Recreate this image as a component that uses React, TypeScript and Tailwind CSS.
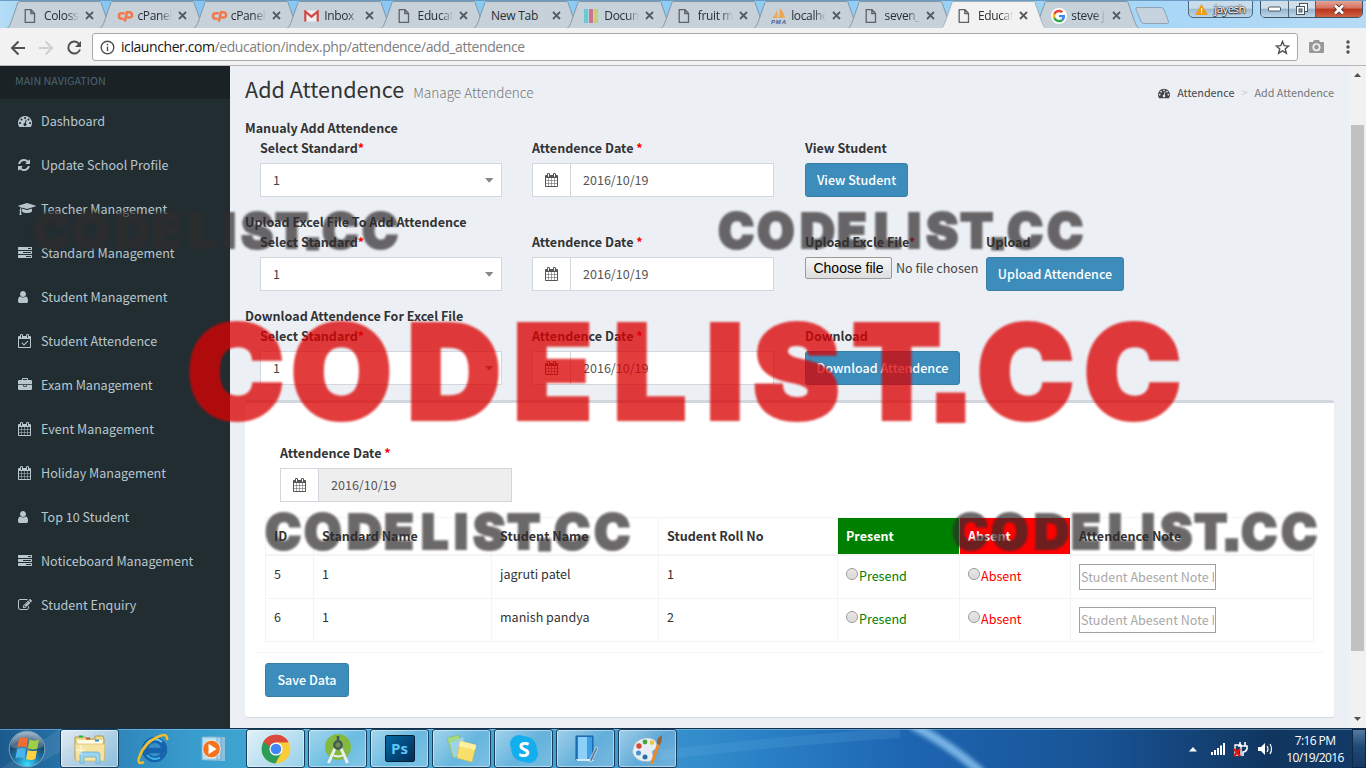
import React from "react";

const SANS = "font-['Noto_Sans_CJK_JP','Source_Sans_Pro',sans-serif]";

/* ---------- icon set (1792 units per em) ---------- */
const ICONS: Record<string, [number, string]> = {
  dash: [1792, "M384 1152q0-53-37.500-90.500t-90.500-37.500-90.500 37.500-37.500 90.500 37.500 90.500 90.500 37.500 90.500-37.500 37.500-90.500zm192-448q0-53-37.500-90.500t-90.500-37.500-90.500 37.500-37.500 90.500 37.500 90.500 90.500 37.500 90.500-37.500 37.500-90.500zm428 481l101-382q6-26-7.500-48.500t-38.500-29.500-48 6.500-30 39.500l-101 382q-60 5-107 43.500t-63 98.500q-20 77 20 146t117 89 146-20 89-117q16-60-6-117t-72-91zm660-33q0-53-37.500-90.500t-90.500-37.500-90.500 37.500-37.500 90.500 37.500 90.500 90.500 37.500 90.500-37.500 37.500-90.500zm-640-640q0-53-37.500-90.500t-90.500-37.500-90.500 37.500-37.500 90.500 37.500 90.500 90.500 37.500 90.500-37.500 37.500-90.500zm448 192q0-53-37.500-90.500t-90.500-37.500-90.500 37.500-37.500 90.500 37.500 90.500 90.500 37.500 90.500-37.500 37.500-90.500zm320 448q0 261-141 483-19 29-54 29h-1402q-35 0-54-29-141-221-141-483 0-182 71-348t191-286 286-191 348-71 348 71 286 191 191 286 71 348z"],
  refresh: [1536, "M1511 1056q0 5-1 7-64 268-268 434.500t-478 166.500q-146 0-282.500-55t-243.500-157l-129 129q-19 19-45 19t-45-19-19-45v-448q0-26 19-45t45-19h448q26 0 45 19t19 45-19 45l-137 137q71 66 161 102t187 36q134 0 250-65t186-179q11-17 53-117 8-23 30-23h192q13 0 22.500 9.500t9.500 22.500zm25-800v448q0 26-19 45t-45 19h-448q-26 0-45-19t-19-45 19-45l138-138q-148-137-349-137-134 0-250 65t-186 179q-11 17-53 117-8 23-30 23h-199q-13 0-22.500-9.500t-9.500-22.500v-7q65-268 270-434.500t480-166.500q146 0 284 55.500t245 156.500l130-129q19-19 45-19t45 19 19 45z"],
  cap: [2304, "M1774 836l18 316q4 69-82 128t-235 93.500-323 34.500-323-34.500-235-93.500-82-128l18-316 574 181q22 7 48 7t48-7zm530-324q0 23-22 31l-1120 352q-4 1-10 1t-10-1l-652-206q-43 34-71 111.500t-34 178.500q63 36 63 109 0 69-58 107l58 433q2 14-8 25-9 11-24 11h-192q-15 0-24-11-10-11-8-25l58-433q-58-38-58-107 0-73 65-111 11-207 98-330l-333-104q-22-8-22-31t22-31l1120-352q4-1 10-1t10 1l1120 352q22 8 22 31z"],
  tasks: [1792, "M1024 1408h640v-128h-640v128zm-384-512h1024v-128h-1024v128zm640-512h384v-128h-384v128zm512 832v256q0 26-19 45t-45 19h-1664q-26 0-45-19t-19-45v-256q0-26 19-45t45-19h1664q26 0 45 19t19 45zm0-512v256q0 26-19 45t-45 19h-1664q-26 0-45-19t-19-45v-256q0-26 19-45t45-19h1664q26 0 45 19t19 45zm0-512v256q0 26-19 45t-45 19h-1664q-26 0-45-19t-19-45v-256q0-26 19-45t45-19h1664q26 0 45 19t19 45z"],
  user: [1280, "M1280 1399q0 109-62.500 187t-150.500 78h-854q-88 0-150.500-78t-62.500-187q0-85 8.500-160.500t31.500-152 58.500-131 94-89 134.500-34.500q131 128 313 128t313-128q76 0 134.500 34.500t94 89 58.500 131 31.500 152 8.500 160.500zm-256-887q0 159-112.500 271.500t-271.500 112.500-271.500-112.500-112.500-271.500 112.500-271.500 271.500-112.500 271.500 112.500 112.500 271.500z"],
  calcheck: [1664, "M1303 964l-512 512q-10 9-23 9t-23-9l-288-288q-9-10-9-23t9-22l46-46q9-9 22-9t23 9l220 220 444-444q10-9 23-9t22 9l46 46q9 9 9 22t-9 23zm-1175 700h1408v-1024h-1408v1024zm384-1216v-288q0-14-9-23t-23-9h-64q-14 0-23 9t-9 23v288q0 14 9 23t23 9h64q14 0 23-9t9-23zm768 0v-288q0-14-9-23t-23-9h-64q-14 0-23 9t-9 23v288q0 14 9 23t23 9h64q14 0 23-9t9-23zm384-64v1280q0 52-38 90t-90 38h-1408q-52 0-90-38t-38-90v-1280q0-52 38-90t90-38h128v-96q0-66 47-113t113-47h64q66 0 113 47t47 113v96h384v-96q0-66 47-113t113-47h64q66 0 113 47t47 113v96h128q52 0 90 38t38 90z"],
  brief: [1792, "M640 256h512v-128h-512v128zm1152 640v480q0 66-47 113t-113 47h-1472q-66 0-113-47t-47-113v-480h672v160q0 26 19 45t45 19h320q26 0 45-19t19-45v-160h672zm-768 0v128h-256v-128h256zm768-480v384h-1792v-384q0-66 47-113t113-47h352v-160q0-40 28-68t68-28h576q40 0 68 28t28 68v160h352q66 0 113 47t47 113z"],
  cal: [1664, "M128 1664h288v-288h-288v288zm352 0h320v-288h-320v288zm-352-352h288v-320h-288v320zm352 0h320v-320h-320v320zm-352-384h288v-288h-288v288zm736 736h320v-288h-320v288zm-384-736h320v-288h-320v288zm768 736h288v-288h-288v288zm-384-352h320v-320h-320v320zm-352-864v-288q0-13-9.500-22.500t-22.500-9.500h-64q-13 0-22.500 9.500t-9.500 22.500v288q0 13 9.500 22.500t22.500 9.500h64q13 0 22.500-9.500t9.500-22.500zm736 864h288v-320h-288v320zm-384-384h320v-288h-320v288zm384 0h288v-288h-288v288zm32-480v-288q0-13-9.500-22.500t-22.500-9.500h-64q-13 0-22.500 9.500t-9.500 22.500v288q0 13 9.500 22.500t22.500 9.500h64q13 0 22.500-9.500t9.500-22.500zm384-64v1280q0 52-38 90t-90 38h-1408q-52 0-90-38t-38-90v-1280q0-52 38-90t90-38h128v-96q0-66 47-113t113-47h64q66 0 113 47t47 113v96h384v-96q0-66 47-113t113-47h64q66 0 113 47t47 113v96h128q52 0 90 38t38 90z"],
  edit: [1792, "M888 1184l116-116-152-152-116 116v56h96v96h56zm440-720q-16-16-33 1l-350 350q-17 17-1 33t33-1l350-350q17-17 1-33zm80 594v190q0 119-84.500 203.500t-203.500 84.500h-832q-119 0-203.500-84.500t-84.500-203.500v-832q0-119 84.500-203.500t203.500-84.500h832q63 0 117 25 15 7 18 23 3 17-9 29l-49 49q-14 14-32 8-23-6-45-6h-832q-66 0-113 47t-47 113v832q0 66 47 113t113 47h832q66 0 113-47t47-113v-126q0-13 9-22l64-64q15-15 35-7t20 29zm-96-738l288 288-672 672h-288v-288zm444 132l-92 92-288-288 92-92q28-28 68-28t68 28l152 152q28 28 28 68t-28 68z"],
};

function Icon({ name, size = 14 }: { name: string; size?: number }) {
  const [w, d] = ICONS[name];
  return (
    <svg width={(w / 1792) * size} height={size} viewBox={`0 0 ${w} 1792`} fill="currentColor" className="block shrink-0">
      <path d={d} />
    </svg>
  );
}

/* ---------- browser tabs ---------- */
const PageIcon = () => (
  <svg width="12" height="14" viewBox="0 0 12 14" fill="none" stroke="#5f6266" strokeWidth="1.3">
    <path d="M1.200 .7h5.800l3.500 3.600v9h-9.300zM6.800 .7v3.800h3.700" />
  </svg>
);
const CpIcon = () => (
  <svg width="17" height="12" viewBox="0 0 17 12" fill="none" stroke="#ee7b50" strokeWidth="2.600" strokeLinecap="round">
    <path d="M6.800 3.300H4.700a2.700 2.700 0 0 0 0 5.400h.8M8 10.600l2-8.300h2.500a2.400 2.400 0 0 1 0 5.200h-1.300" />
  </svg>
);
const MailIcon = () => (
  <svg width="15" height="12" viewBox="0 0 15 12">
    <rect x="1" y=".5" width="13" height="11" fill="#eceef0" />
    <path d="M1.300 11.500V1.500l6.200 5.200 6.200-5.200v10" fill="none" stroke="#cf4b47" strokeWidth="2.200" />
  </svg>
);
const BarsIcon = () => (
  <svg width="14" height="14" viewBox="0 0 14 14">
    <path d="M0 0h4v14H0z" fill="#67cbd1" />
    <path d="M5 0h4v14H5z" fill="#cc7393" />
    <path d="M10 0h4v14h-4z" fill="#c2d078" />
  </svg>
);
const PmaIcon = () => (
  <svg width="16" height="16" viewBox="0 0 16 16">
    <path d="M1 10Q5 7 5.500 2 7 6 6.500 10zM7.500 10Q9.500 5 8.500 0 13 4 14 10z" fill="#f0a64e" />
    <text x="0" y="15.500" fontSize="6" fontWeight="bold" fontStyle="italic" fill="#4d5b93" textLength="15" fontFamily="Liberation Sans">PMA</text>
  </svg>
);
const GIcon = () => (
  <svg width="16" height="16" viewBox="0 0 48 48">
    <circle cx="24" cy="24" r="24" fill="#fff" />
    <g transform="translate(5 5) scale(.79)">
      <path fill="#EA4335" d="M24 9.500c3.540 0 6.710 1.220 9.210 3.600l6.850-6.850C35.900 2.380 30.470 0 24 0 14.620 0 6.510 5.380 2.560 13.220l7.980 6.190C12.430 13.720 17.740 9.500 24 9.500z" />
      <path fill="#4285F4" d="M46.980 24.550c0-1.570-.15-3.090-.38-4.550H24v9.020h12.940c-.58 2.960-2.260 5.480-4.780 7.180l7.730 6c4.510-4.180 7.090-10.360 7.090-17.650z" />
      <path fill="#FBBC05" d="M10.530 28.590c-.48-1.450-.76-2.990-.76-4.590s.27-3.140.76-4.590l-7.980-6.190C.92 16.460 0 20.120 0 24c0 3.880.92 7.540 2.560 10.780l7.970-6.190z" />
      <path fill="#34A853" d="M24 48c6.480 0 11.930-2.130 15.890-5.810l-7.730-6c-2.150 1.450-4.920 2.300-8.160 2.300-6.260 0-11.570-4.220-13.470-9.910l-7.980 6.190C6.510 42.620 14.620 48 24 48z" />
    </g>
  </svg>
);

type TabDef = { title: string; icon?: React.ReactNode; active?: boolean };
const TABS: TabDef[] = [
  { title: "Coloss", icon: <PageIcon /> },
  { title: "cPanel", icon: <CpIcon /> },
  { title: "cPanel", icon: <CpIcon /> },
  { title: "Inbox", icon: <MailIcon /> },
  { title: "Educat", icon: <PageIcon /> },
  { title: "New Tab" },
  { title: "Docum", icon: <BarsIcon /> },
  { title: "fruit m", icon: <PageIcon /> },
  { title: "localho", icon: <PmaIcon /> },
  { title: "seven_", icon: <PageIcon /> },
  { title: "Educat", icon: <PageIcon />, active: true },
  { title: "steve j", icon: <GIcon /> },
];

function Tab({ title, icon, active }: TabDef) {
  return (
    <div className={`relative h-full w-[93.4px] shrink-0 ${active ? "z-10" : ""}`}>
      <svg width="108" height="29" viewBox="0 0 108 29" className="absolute left-0 top-0">
        <path
          d="M0 28.500C4 27.500 4 25 12 2.500Q12.500 1.500 14 1.500H93Q94.500 1.500 95 2.500C103 25 103 27.500 107 28.500"
          fill={active ? "#f2f2f2" : "#c6d1d9"}
          stroke={active ? "#9fb0bd" : "#8496a4"}
        />
      </svg>
      <div className="relative flex h-full items-center pl-[18px] pt-[2px]">
        {icon && <div className="flex w-5 items-center">{icon}</div>}
        <div
          className={`overflow-hidden whitespace-nowrap text-[12px] leading-[18px] text-[#2b2f33] ${
            icon ? "w-[35px] tracking-[-0.35px] [mask-image:linear-gradient(90deg,#000_65%,transparent_100%)]" : "w-[55px] tracking-[-0.25px]"
          }`}
        >
          {title}
        </div>
        <svg width="9" height="9" viewBox="0 0 9 9" stroke="#565b60" strokeWidth="1.800" className="ml-[6px]">
          <path d="M1 1l7 7M8 1l-7 7" />
        </svg>
      </div>
    </div>
  );
}

function BrowserChrome() {
  return (
    <header className="relative h-[66px] shrink-0 font-['Open_Sans','Noto_Sans',sans-serif]">
      <div className="flex h-[28px] items-start overflow-hidden border-t border-[#6b9dc4] bg-[linear-gradient(90deg,#b4dcf5,#86c6f2_8%,#8fcdf6_60%,#a6d6f7_82%,#b5dbf6)] pl-[6px]">
        <div className="-mt-px flex h-[29px]">
          {TABS.map((t, i) => (
            <Tab key={i} {...t} />
          ))}
        </div>
        <svg width="36" height="20" viewBox="0 0 36 20" className="ml-[8px] mt-[5px]">
          <path d="M2 1.500h24q2 0 3 2l4.500 12q.5 2-1.500 2H9q-2 0-3-2L1 3.500q-.5-2 1-2z" fill="#c6d3df" stroke="#8ea3b5" />
        </svg>
        <div className="ml-[17px] -mt-px flex h-[18px] w-[65px] items-center justify-center gap-[6px] rounded-b-[5px] border border-[#48677f] bg-[linear-gradient(#c9dcec_45%,#9dbdd6_50%,#bcd5e8)]">
          <svg width="13" height="11" viewBox="0 0 13 11">
            <path d="M6.500 0L13 11H0z" fill="#f39c12" />
            <path d="M6 4h1.200v3.500H6zM6 8.500h1.200v1.200H6z" fill="#fff" />
          </svg>
          <span className="text-[11.5px] leading-[16px] tracking-[-0.55px] text-white [text-shadow:0_0_2px_#000,0_0_2px_#333,0_1px_1px_#333]">jayesh</span>
        </div>
        <div className="ml-[7px] -mt-px flex h-[18px] w-[103px] overflow-hidden rounded-b-[5px] border border-[#3e5568]">
          <div className="flex w-[28px] items-center justify-center border-r border-[#4c6579] bg-[linear-gradient(#d0deea_45%,#94b4cc_50%,#bdd5e8)]">
            <svg width="13" height="6" viewBox="0 0 13 6"><rect x=".5" y="1" width="12" height="4" rx="1" fill="#fff" stroke="#4b5661" /></svg>
          </div>
          <div className="flex w-[27px] items-center justify-center border-r border-[#4c6579] bg-[linear-gradient(#d0deea_45%,#94b4cc_50%,#bdd5e8)]">
            <svg width="12" height="12" viewBox="0 0 12 12" fill="#fff" stroke="#46525e">
              <rect x="3.500" y=".5" width="8" height="8" />
              <rect x=".5" y="3.500" width="8" height="8" />
              <rect x="3" y="6" width="3" height="3" fill="#8fb0c8" />
            </svg>
          </div>
          <div className="flex flex-1 items-center justify-center bg-[linear-gradient(#e5a497,#d3705c_45%,#b9351c_50%,#cf6142)]">
            <svg width="12" height="11" viewBox="0 0 12 11">
              <path d="M2 1.500l8 8M10 1.500l-8 8" stroke="#573433" strokeWidth="4.500" />
              <path d="M2 1.500l8 8M10 1.500l-8 8" stroke="#fff" strokeWidth="2.600" />
            </svg>
          </div>
        </div>
      </div>
      <div className="flex h-[38px] items-center border-b border-[#b8b8b8] bg-[#f2f2f2]">
        <svg width="92" height="36" viewBox="0 0 92 36" fill="none" strokeWidth="2" className="shrink-0">
          <path d="M25 19H12.500M18.500 12.500L12 19l6.500 6.500" stroke="#505050" />
          <path d="M39 19h12.500M45.500 12.500L52 19l-6.500 6.500" stroke="#d0d0d0" />
          <path d="M79.300 15.200A6 6 0 1 0 80 20.500" stroke="#505050" />
          <path d="M81 12v6h-6z" fill="#505050" />
        </svg>
        <div className="mt-px flex h-[28px] w-[1206px] shrink-0 items-center rounded-[3px] border border-[#a9a9a9] bg-white pl-[7px] pr-[7px]">
          <svg width="15" height="15" viewBox="0 0 15 15" fill="none" stroke="#505050" strokeWidth="1.400">
            <circle cx="7.500" cy="7.500" r="6.300" />
            <path d="M7.500 6.500v4.500M7.500 3.800v1.500" />
          </svg>
          <span className="ml-[6px] whitespace-nowrap text-[14px] leading-[20px] tracking-[-0.42px] text-[#808080]">
            <span className="text-[#151515]">iclauncher.com</span>/education/index.php/attendence/add_attendence
          </span>
          <svg width="15" height="15" viewBox="0 0 15 15" fill="none" stroke="#505050" strokeWidth="1.400" className="ml-auto">
            <path d="M7.500 1.500l1.700 4.200 4.500.3-3.500 2.900 1.200 4.400-3.900-2.500-3.900 2.500 1.200-4.400L1.300 6l4.500-.3z" />
          </svg>
        </div>
        <svg width="15" height="13" viewBox="0 0 15 13" className="ml-[11px]">
          <path d="M1 2h3l1-2h5l1 2h3q1 0 1 1v9q0 1-1 1H1q-1 0-1-1V3q0-1 1-1z" fill="#999" />
          <circle cx="7.500" cy="7.200" r="3.200" fill="#999" stroke="#f2f2f2" strokeWidth="1.700" />
        </svg>
        <svg width="4" height="14" viewBox="0 0 4 14" fill="#505050" className="ml-[22px]">
          <circle cx="2" cy="2" r="1.700" />
          <circle cx="2" cy="7" r="1.700" />
          <circle cx="2" cy="12" r="1.700" />
        </svg>
      </div>
    </header>
  );
}

/* ---------- sidebar ---------- */
const NAV: [string, string][] = [
  ["dash", "Dashboard"],
  ["refresh", "Update School Profile"],
  ["cap", "Teacher Management"],
  ["tasks", "Standard Management"],
  ["user", "Student Management"],
  ["calcheck", "Student Attendence"],
  ["brief", "Exam Management"],
  ["cal", "Event Management"],
  ["cal", "Holiday Management"],
  ["user", "Top 10 Student"],
  ["tasks", "Noticeboard Management"],
  ["edit", "Student Enquiry"],
];

function Sidebar() {
  return (
    <aside className="w-[230px] shrink-0 bg-[#222d32]">
      <div className="h-[33px] bg-[#1a2226] pl-[15px] pt-[6px] text-[10.75px] leading-[17px] text-[#4b646f]">MAIN NAVIGATION</div>
      {NAV.map(([icon, label]) => (
        <div key={label} className="flex h-11 items-center pl-[18px] text-[12.58px] leading-5 text-[#b8c7ce]">
          <span className="w-[23px]"><Icon name={icon} /></span>
          <span className="whitespace-nowrap">{label}</span>
        </div>
      ))}
    </aside>
  );
}

/* ---------- form pieces ---------- */
const Star = () => <span className="text-[#f00]">*</span>;

function SelectBox() {
  return (
    <div className="flex h-[34px] items-center justify-between border border-[#d2d6de] bg-white pl-3 pr-[7px] text-[#444]">
      <span>1</span>
      <svg width="9" height="5" viewBox="0 0 9 5"><path d="M0 0h8.500L4.250 4.800z" fill="#888" /></svg>
    </div>
  );
}

function DateBox({ disabled }: { disabled?: boolean }) {
  return (
    <div className="flex h-[34px] border border-[#d2d6de] bg-white text-[#555]">
      <div className="flex w-[38px] items-center justify-center border-r border-[#d2d6de]"><Icon name="cal" /></div>
      <div className={`flex flex-1 items-center pl-3 ${disabled ? "bg-[#eee]" : ""}`}>2016/10/19</div>
    </div>
  );
}

function Btn({ children, w }: { children: React.ReactNode; w: string }) {
  return (
    <button className={`flex h-[34px] items-center justify-center whitespace-nowrap rounded-[3px] border border-[#367fa9] bg-[#3c8dbc] font-medium text-white ${w}`}>
      {children}
    </button>
  );
}

function Field({ label, w, children }: { label: React.ReactNode; w: string; children: React.ReactNode }) {
  return (
    <div className={`shrink-0 ${w}`}>
      <div className="mb-[5px] h-5 whitespace-nowrap font-bold text-[#333]">{label}</div>
      {children}
    </div>
  );
}

function Section({ title, children }: { title: string; children: React.ReactNode }) {
  return (
    <section className="h-[94px]">
      <div className="h-5 font-bold text-[#333]">{title}</div>
      <div className="flex pl-[15px]">
        <Field label={<>Select Standard<Star /></>} w="mr-[30px] w-[242px]"><SelectBox /></Field>
        <Field label={<>Attendence Date <Star /></>} w="mr-[31px] w-[242px]"><DateBox /></Field>
        {children}
      </div>
    </section>
  );
}

const Radio = () => (
  <span className="mt-[-4px] block size-[12px] rounded-full border border-[#999] bg-[linear-gradient(#e8e8e8,#d8d8d8)] shadow-[inset_0_0_1px_#fff]" />
);

const HEADS = ["ID", "Standard Name", "Student Name", "Student Roll No", "Present", "Absent", "Attendence Note"];
const STUDENTS = [
  ["5", "1", "jagruti patel", "1"],
  ["6", "1", "manish pandya", "2"],
];

function StudentTable() {
  return (
    <table className="w-[1049px] table-fixed border-collapse border border-[#f4f4f4] text-[#333]">
      <colgroup>
        <col className="w-[48px]" />
        <col className="w-[178px]" />
        <col className="w-[167px]" />
        <col className="w-[179px]" />
        <col className="w-[122px]" />
        <col className="w-[111px]" />
        <col />
      </colgroup>
      <thead>
        <tr className="h-[37px]">
          {HEADS.map((h) => (
            <th
              key={h}
              className={`border border-b-2 border-[#f4f4f4] px-2 py-0 text-left font-bold ${
                h === "Present" ? "bg-[#008000] bg-clip-padding text-white" : h === "Absent" ? "bg-[#f00] bg-clip-padding text-white" : ""
              }`}
            >
              {h}
            </th>
          ))}
        </tr>
      </thead>
      <tbody>
        {STUDENTS.map((r) => (
          <tr key={r[0]} className="h-[43px] align-top first:h-[44px]">
            {r.map((c, i) => (
              <td key={i} className="border border-[#f4f4f4] px-2 pt-[8px]">{c}</td>
            ))}
            <td className="border border-[#f4f4f4] px-2 pt-[10px]">
              <div className="flex items-center gap-[1px] text-[#008000]"><Radio />Presend</div>
            </td>
            <td className="border border-[#f4f4f4] px-2 pt-[10px]">
              <div className="flex items-center gap-[1px] text-[#f00]"><Radio />Absent</div>
            </td>
            <td className="border border-[#f4f4f4] px-2 pt-[8px]">
              <div className="h-[26px] w-[137px] overflow-hidden border border-[#a0a0a0] bg-white px-[1px] pt-[2px]">
                <div className="w-[133px] overflow-hidden whitespace-nowrap text-[#a9a9a9]">Student Abesent Note Here</div>
              </div>
            </td>
          </tr>
        ))}
      </tbody>
    </table>
  );
}

function Content() {
  return (
    <main className="min-w-0 flex-1 overflow-hidden bg-[#ecf0f5] px-[15px]">
      <div className="flex h-[52px] items-start justify-between pt-[10px]">
        <div className="flex items-baseline whitespace-nowrap">
          <h1 className="text-[21.6px] leading-[26px] text-[#333]">Add Attendence</h1>
          <span className="ml-[9px] text-[13.55px] font-light leading-[15px] text-[#777]">Manage Attendence</span>
        </div>
        <div className="mt-[8px] flex items-center whitespace-nowrap text-[10.8px] leading-[17px] text-[#777]">
          <span className="mr-[7px] text-[#444]"><Icon name="dash" size={12} /></span>
          <span className="text-[#444]">Attendence</span>
          <span className="mx-[7px] text-[#ccc]">&gt;</span>
          <span>Add Attendence</span>
        </div>
      </div>
      <Section title="Manualy Add Attendence">
        <Field label="View Student" w="w-[200px]"><Btn w="w-[103px]">View Student</Btn></Field>
      </Section>
      <Section title="Upload Excel File To Add Attendence">
        <Field label={<>Upload Excle File<Star /></>} w="w-[181px]">
          <div className="flex items-center whitespace-nowrap text-[#444]">
            <span className="mr-1 flex h-[22px] w-[87px] items-center justify-center rounded-[2px] border border-[#999] bg-[linear-gradient(#f6f6f6,#dedede)] font-['Liberation_Sans',sans-serif] text-[14px] text-black">
              Choose file
            </span>
            No file chosen
          </div>
        </Field>
        <Field label="Upload" w="w-[140px]"><Btn w="w-[138px]">Upload Attendence</Btn></Field>
      </Section>
      <Section title="Download Attendence For Excel File">
        <Field label="Download" w="w-[200px]"><Btn w="w-[155px]">Download Attendence</Btn></Field>
      </Section>
      <div className="h-[317px] w-[1089px] rounded-[3px] border-t-[3px] border-[#d2d6de] bg-white px-[10px] pt-[40px] shadow-[0_1px_1px_rgba(0,0,0,0.1)]">
        <div className="pl-[25px]">
          <Field label={<>Attendence Date <Star /></>} w="w-[232px]"><DateBox disabled /></Field>
        </div>
        <div className="px-[10px] pt-[15px]"><StudentTable /></div>
        <div className="mb-[10px] mt-[10px] h-px bg-[#f4f4f4]" />
        <div className="pl-[10px]"><Btn w="w-[84px]">Save Data</Btn></div>
      </div>
    </main>
  );
}

function Scrollbar() {
  return (
    <div className="flex w-[17px] shrink-0 flex-col items-center bg-[#f1f1f1]">
      <svg width="7" height="4" viewBox="0 0 7 4" className="mt-[7px]"><path d="M0 4l3.500-4L7 4z" fill="#505050" /></svg>
      <div className="mt-[48px] h-[526px] w-[13px] bg-[#c1c1c1]" />
      <svg width="7" height="4" viewBox="0 0 7 4" className="mb-[7px] mt-auto"><path d="M0 0l3.500 4L7 0z" fill="#505050" /></svg>
    </div>
  );
}

/* ---------- taskbar ---------- */
const Orb = () => (
  <svg width="38" height="38" viewBox="0 0 38 38">
    <defs>
      <radialGradient id="orb" cx=".5" cy=".95" r=".9">
        <stop offset="0" stopColor="#3ce0ff" />
        <stop offset=".4" stopColor="#1c79ac" />
        <stop offset=".75" stopColor="#1a4468" />
        <stop offset="1" stopColor="#7f9fb5" />
      </radialGradient>
    </defs>
    <circle cx="19" cy="19" r="17.800" fill="url(#orb)" stroke="#7fa5bf" />
    <path d="M3 17a16 15 0 0 1 32 0q-16 5-32 0z" fill="#fff" opacity=".22" />
    <path d="M11 8.500q4.500-2 9 0l-1.500 9q-4.500-2-9-.3z" fill="#ef6c32" />
    <path d="M21.500 9.500q4 2 9.500 .2l-1.800 9q-5 1.600-9.300-.4z" fill="#9fcf45" />
    <path d="M9 19q4.500-1.800 9 .2l-1.500 9.300q-4.500-2-9-.2z" fill="#4bb4ee" />
    <path d="M19.600 20q4.600 2 9.400 .4l-1.700 8.700q-4.800 1.800-9.200-.2z" fill="#ffd13f" />
  </svg>
);
const Explorer = () => (
  <svg width="34" height="30" viewBox="0 0 34 30">
    <path d="M2 3h10l2 2h8V2h8l1 3v20H2z" fill="#edd98c" stroke="#b69a4a" />
    <path d="M4 6h26l-1 4H5z" fill="#fffbe3" />
    <path d="M2 10h30l-1 17H3z" fill="#f6e5a2" stroke="#d2b566" strokeWidth=".6" />
    <path d="M6 1.500h4v2H6z" fill="#20b73a" /><path d="M13 3.500h4v2h-4z" fill="#d2502e" /><path d="M22 5.500h4v2h-4z" fill="#3a8fd2" />
    <path d="M7 29v-8q0-3 3-3h14q3 0 3 3v8h-4v-6H11v6z" fill="#9ad4ec" stroke="#5aa6cd" strokeWidth=".7" />
    <path d="M8 11v10M3 16h10" stroke="#fff" opacity=".8" />
  </svg>
);
const IE = () => (
  <svg width="34" height="32" viewBox="0 0 34 32" fill="none">
    <path d="M30 20a12 12 0 1 1 .5-3.500H14" stroke="#0d3f7c" strokeWidth="1" />
    <path d="M27.500 20.500a9.500 9.500 0 1 1 .8-4.500v1.500H11" stroke="#1763ae" strokeWidth="5.600" />
    <path d="M10 12a10 10 0 0 1 16-3" stroke="#6cc4f3" strokeWidth="2" />
    <path d="M11 22a10 10 0 0 0 13 2.500" stroke="#39b5ea" strokeWidth="2" />
    <path d="M8 29q-7 3-5-4Q8 9 24 3q8-3 7 4" stroke="#f0bd2d" strokeWidth="2.500" />
  </svg>
);
const Wmp = () => (
  <svg width="28" height="26" viewBox="0 0 28 26">
    <path d="M9 1h15v24H9z" fill="#8bc1de" /><path d="M6 1h14v23H6z" fill="#a9d5eb" stroke="#6aa8cc" /><path d="M1 1h15v23H1z" fill="#b9dff0" stroke="#73b1d2" />
    <circle cx="10.500" cy="13" r="8.800" fill="#f47321" stroke="#fff" strokeWidth=".7" />
    <path d="M7.500 7.800v10.400l8-5.200z" fill="#fff" />
  </svg>
);
const Chrome = () => (
  <svg width="30" height="30" viewBox="0 0 48 48">
    <circle cx="24" cy="24" r="23" fill="#f9cc3a" />
    <path d="M24 24L4 12.500A23 23 0 0 1 44 13H24z" fill="#dd4b3e" />
    <path d="M4 12.500A23 23 0 0 0 23 47l10-18-9-5z" fill="#2a9e59" />
    <path d="M4 12.500L14.500 29 24 24l-4-10z" fill="#2a9e59" /><path d="M4 12.500A23 23 0 0 1 44 13H24a11 11 0 0 0-10 7z" fill="#dd4b3e" />
    <circle cx="24" cy="24" r="10.500" fill="#fff" /><circle cx="24" cy="24" r="8.500" fill="#4285f4" />
  </svg>
);
const Studio = () => (
  <svg width="32" height="32" viewBox="0 0 32 32" fill="none">
    <circle cx="16" cy="14" r="13" fill="#83b93f" />
    <path d="M14 13L6.500 30M18 13l7.500 17" stroke="#eceff1" strokeWidth="3" />
    <path d="M9 21q7 5 14 0" stroke="#eceff1" strokeWidth="2" />
    <path d="M16 3v5" stroke="#455a54" strokeWidth="2.500" /><circle cx="16" cy="12" r="3.700" fill="#6f8c55" stroke="#455a54" strokeWidth="2.400" />
  </svg>
);
const Ps = () => (
  <span className="flex h-[27px] w-[30px] items-center justify-center rounded-[2px] border border-[#001f38] bg-[linear-gradient(135deg,#0668a4,#032e57)] font-['Open_Sans',sans-serif] text-[15px] font-bold leading-none text-[#5bc8fa]">
    Ps
  </span>
);
const Notes = () => (
  <svg width="34" height="30" viewBox="0 0 34 30">
    <path d="M2 4l12-3 5 15-11 8z" fill="#a6d982" stroke="#83b967" strokeWidth=".6" />
    <path d="M5 9l13-6 4 15-13 6z" fill="#9dd2e7" />
    <path d="M15 7l16 4-4 17-15-4z" fill="#f8e06a" stroke="#dcbf3d" strokeWidth=".6" />
    <path d="M15 7l16 4-1 5-16-4z" fill="#fff1a1" />
  </svg>
);
const Skype = () => (
  <svg width="32" height="30" viewBox="0 0 32 30">
    <circle cx="11" cy="10" r="9" fill="#13aeee" /><circle cx="21" cy="20" r="9" fill="#13aeee" /><circle cx="16" cy="15" r="12.800" fill="#13aeee" />
    <text x="16" y="22.500" textAnchor="middle" fontSize="21" fontWeight="bold" fill="#fff" fontFamily="Open Sans">S</text>
  </svg>
);
const Notebook = () => (
  <svg width="30" height="30" viewBox="0 0 30 30">
    <path d="M5 2h17v24H5z" fill="#1f7fd0" stroke="#1b5c99" />
    <path d="M7 3h9v22H7z" fill="#8cd1f7" />
    <path d="M16 3h5v22h-5z" fill="#3f9fe6" />
    <path d="M5 25h17l1 2H6z" fill="#d3e9f5" />
    <path d="M25 13l2 1-6 13-2 1v-3z" fill="#5d7a90" stroke="#dcebf4" strokeWidth=".7" />
  </svg>
);
const Paint = () => (
  <svg width="36" height="32" viewBox="0 0 36 32">
    <path d="M3 16Q4 7 15 5q11-1 12 7 0 4-3 5t-1 5-2 6q-10 2-15-3t-3-9z" fill="#e7eef2" stroke="#9fb3bf" strokeWidth=".7" />
    <circle cx="9" cy="13" r="2.700" fill="#d64b33" /><circle cx="15" cy="9" r="2.400" fill="#43a647" /><circle cx="22" cy="9.500" r="2.300" fill="#efc33a" />
    <circle cx="8.500" cy="20" r="2.500" fill="#4a8fd0" /><circle cx="15" cy="24" r="2.500" fill="#2a6fa9" />
    <path d="M20 31l7-20 3 1-7 19z" fill="#e88a2b" /><path d="M27 11q-1-6 5-9 0 7-2 10z" fill="#96633a" />
  </svg>
);

function TaskButton({ children, bright }: { children: React.ReactNode; bright?: boolean }) {
  return (
    <div
      className={`mr-[3px] flex h-[39px] w-[59px] items-center justify-center rounded-[3px] border border-[#173d5b] shadow-[inset_0_0_0_1px_rgba(255,255,255,0.45)] ${
        bright ? "bg-[linear-gradient(135deg,rgba(255,255,255,0.85),rgba(230,245,250,0.5))]" : "bg-[linear-gradient(135deg,rgba(255,255,255,0.5),rgba(255,255,255,0.18)_55%,rgba(255,255,255,0.3))]"
      }`}
    >
      {children}
    </div>
  );
}

function Taskbar() {
  return (
    <footer className="relative h-[40px] shrink-0 overflow-hidden border-t border-[#15304b] bg-[linear-gradient(90deg,#1b5a8d,#2c7fb6_7%,#389ccc_14%,#4cb0dc_24%,#3f9cd2_45%,#2a80c5_56%,#1e66b2_66%,#185496_80%,#10365f_93%,#123a68)]">
      <svg width="1366" height="40" className="absolute inset-0">
        <path d="M912 -4Q948 14 982 44" fill="none" stroke="#8ec6f2" strokeWidth="9" opacity=".8" className="blur-[2px]" />
        <path d="M0 40L60 0h40L30 40z" fill="#fff" opacity=".08" />
        <path d="M660 26Q800 10 900 4" fill="none" stroke="#72bdea" strokeWidth="10" opacity=".15" />
        <path d="M0 .5H1366" stroke="#a4d4ee" opacity=".45" />
      </svg>
      <div className="relative flex h-full">
        <div className="flex w-[60px] items-center pl-[8px]"><Orb /></div>
        <TaskButton bright><Explorer /></TaskButton>
        <div className="flex w-[62px] items-center justify-center"><IE /></div>
        <div className="flex w-[62px] items-center justify-center"><Wmp /></div>
        <TaskButton bright><Chrome /></TaskButton>
        <TaskButton><Studio /></TaskButton>
        <TaskButton><Ps /></TaskButton>
        <TaskButton><Notes /></TaskButton>
        <TaskButton><Skype /></TaskButton>
        <TaskButton><Notebook /></TaskButton>
        <TaskButton><Paint /></TaskButton>
        <svg width="90" height="16" viewBox="0 0 90 16" className="ml-auto mr-[10px] mt-[12px]">
          <path d="M4 10.500L8 6l4 4.500z" fill="#fff" />
          <path d="M26 11h2v3h-2zM29 9h2v5h-2zM32 7h2v7h-2zM35 4.500h2V14h-2zM38 2h2v12h-2z" fill="#fff" />
          <path d="M50 4h6v10h-6z" fill="none" stroke="#fff" strokeWidth="1.400" /><path d="M55 1v4M60 1v4M53 5h9v3q-1 3-4 3v4" fill="none" stroke="#fff" strokeWidth="1.600" />
          <path d="M49 8l6 7M55 8l-6 7" stroke="#e3170d" strokeWidth="2.500" />
          <path d="M73 6h3l4-4v12l-4-4h-3z" fill="#fff" /><path d="M82 5q2 3 0 6M85 3q3 5 0 10" fill="none" stroke="#fff" strokeWidth="1.200" />
        </svg>
        <div className="mr-[7px] w-[60px] whitespace-nowrap pt-[3px] text-center font-['Open_Sans',sans-serif] text-[12px] leading-[17px] tracking-[-0.6px] text-white">
          <div>7:16 PM</div>
          <div>10/19/2016</div>
        </div>
        <div className="w-[14px] border border-[#0d2745] bg-[linear-gradient(#567ba0,#1f4874_45%,#143a64)]" />
      </div>
    </footer>
  );
}

/* ---------- watermark ---------- */
const SMALL_X = [0, 39, 82, 119, 156, 189, 208, 242, 272, 289, 329];
const BIG_X = [187, 291, 407, 513, 613, 706, 753, 852, 930, 977, 1084];

function Watermark() {
  const marks = [[35, 248], [720, 248], [267, 549], [954, 549]];
  return (
    <svg width="1366" height="768" className="pointer-events-none absolute inset-0 font-['Inter',sans-serif] font-black">
      {marks.map(([x, y]) => (
        <g key={`${x}-${y}`} opacity=".71" fill="#302c2d" stroke="#302c2d" strokeWidth="2" className="blur-[0.9px]">
          <text x={SMALL_X.map((v) => v + x - 2).join(" ")} y={y - 0.5} fontSize="48.500">
            CODELIST<tspan fontFamily="Liberation Sans" fontWeight="bold" fontSize="55" strokeWidth="5">.</tspan>CC
          </text>
        </g>
      ))}
      <g opacity=".77" fill="#da0202" stroke="#da0202" strokeWidth="4" className="blur-[0.8px]">
        <text x={BIG_X.join(" ")} y="418.700" fontSize="130">
          CODELIST<tspan fontFamily="Liberation Sans" fontWeight="bold" fontSize="150" strokeWidth="8">.</tspan>CC
        </text>
      </g>
    </svg>
  );
}

export default function App() {
  return (
    <div className={`relative flex h-[768px] w-[1366px] flex-col overflow-hidden text-[12.56px] leading-5 ${SANS}`}>
      <BrowserChrome />
      <div className="flex h-[662px] shrink-0">
        <Sidebar />
        <Content />
        <Scrollbar />
      </div>
      <Taskbar />
      <Watermark />
    </div>
  );
}
